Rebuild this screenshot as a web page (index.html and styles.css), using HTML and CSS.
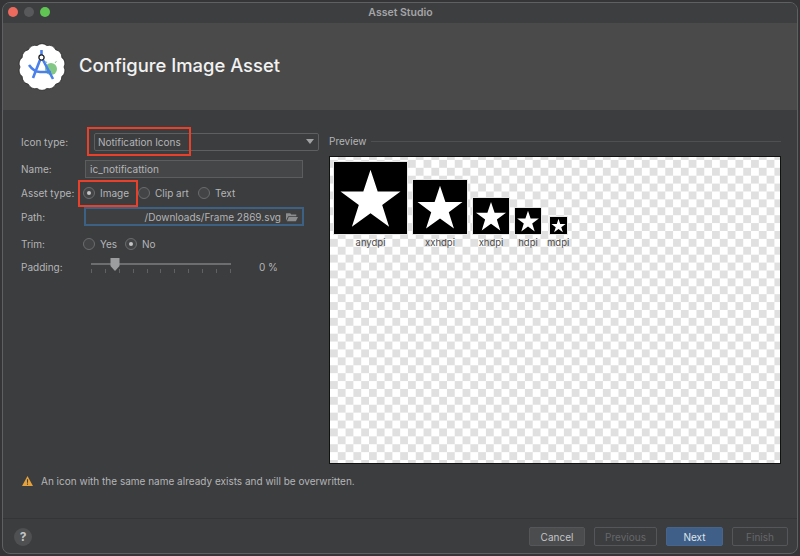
FILE: index.html
```html
<!DOCTYPE html>
<html lang="en">
<head>
  <meta charset="UTF-8">
  <title>Asset Studio</title>
  <link rel="stylesheet" href="styles.css">
</head>
<body>
  <div class="window">
    <div class="titlebar">
      <span class="light light-red"></span>
      <span class="light light-grey"></span>
      <span class="light light-green"></span>
      <span class="titlebar-text">Asset Studio</span>
    </div>

    <div class="header">
      <svg class="logo" viewBox="-24 -24 48 48">
        <path class="logo-badge" d="M22 0A8 8 0 0 1 19.82 9.55A8 8 0 0 1 13.72 17.2A8 8 0 0 1 4.9 21.45A8 8 0 0 1 -4.9 21.45A8 8 0 0 1 -13.72 17.2A8 8 0 0 1 -19.82 9.55A8 8 0 0 1 -22 0A8 8 0 0 1 -19.82 -9.55A8 8 0 0 1 -13.72 -17.2A8 8 0 0 1 -4.9 -21.45A8 8 0 0 1 4.9 -21.45A8 8 0 0 1 13.72 -17.2A8 8 0 0 1 19.82 -9.55A8 8 0 0 1 22 0Z"/>
        <circle class="logo-droid" cx="9" cy="2" r="6"/>
        <path class="logo-antenna" d="M5 -4L3.5 -6M13 -4L14.5 -6"/>
        <path class="logo-lines" d="M-0.5 -17V-11M-2 -7L-9 11M1 -7L11 12M-13 -2Q-8 5 -2 5H9"/>
        <circle class="logo-pivot" cx="-0.5" cy="-9.5" r="2.6"/>
      </svg>
      <h1>Configure Image Asset</h1>
    </div>

    <div class="content">
      <div class="columns">
        <div class="form">
          <div class="row">
            <span class="label">Icon type:</span>
            <div class="combo">Notification Icons<span class="combo-arrow"></span></div>
          </div>
          <div class="row row-far">
            <span class="label">Name:</span>
            <div class="input">ic_notificattion</div>
          </div>
          <div class="row">
            <span class="label">Asset type:</span>
            <div class="radios">
              <span class="radio radio-on"></span><span class="radio-text w-image">Image</span>
              <span class="radio"></span><span class="radio-text w-clip">Clip art</span>
              <span class="radio"></span><span class="radio-text">Text</span>
            </div>
          </div>
          <div class="row row-near row-path">
            <span class="label">Path:</span>
            <div class="input input-focus">/Downloads/Frame 2869.svg
              <svg class="folder" viewBox="0 0 14 11"><path d="M0 1.5V10L2.5 4.5H12V2.5H6L5 1H0.5Z"/><path d="M3.2 5.5H14L11.5 10.5H1Z"/></svg>
            </div>
          </div>
          <div class="row row-far">
            <span class="label">Trim:</span>
            <div class="radios">
              <span class="radio"></span><span class="radio-text w-yes">Yes</span>
              <span class="radio radio-on"></span><span class="radio-text">No</span>
            </div>
          </div>
          <div class="row row-near">
            <span class="label">Padding:</span>
            <div class="slider">
              <div class="slider-track"></div>
              <div class="slider-ticks">
                <i></i><i></i><i></i><i></i><i></i><i></i><i></i><i></i><i></i><i></i><i></i>
              </div>
              <svg class="slider-thumb" viewBox="0 0 10 13"><path d="M0.5 0H9.5V8L5 13L0.5 8Z"/></svg>
            </div>
            <span class="slider-value">0 %</span>
          </div>
          <div class="mark mark-combo"></div>
          <div class="mark mark-image"></div>
        </div>

        <div class="preview">
          <div class="preview-title"><span>Preview</span><div class="preview-rule"></div></div>
          <div class="canvas">
            <div class="icons">
              <div class="icon-col">
                <svg class="icon s73" viewBox="0 0 24 24"><use href="#star"/></svg>
                <span>anydpi</span>
              </div>
              <div class="icon-col">
                <svg class="icon s54" viewBox="0 0 24 24"><use href="#star"/></svg>
                <span>xxhdpi</span>
              </div>
              <div class="icon-col">
                <svg class="icon s36" viewBox="0 0 24 24"><use href="#star"/></svg>
                <span>xhdpi</span>
              </div>
              <div class="icon-col">
                <svg class="icon s26" viewBox="0 0 24 24"><use href="#star"/></svg>
                <span>hdpi</span>
              </div>
              <div class="icon-col">
                <svg class="icon s17" viewBox="0 0 24 24"><use href="#star"/></svg>
                <span>mdpi</span>
              </div>
            </div>
          </div>
        </div>
      </div>

      <div class="warning">
        <svg class="warning-icon" viewBox="0 0 12 11"><path class="warning-fill" d="M6 0L12 11H0Z"/><path class="warning-mark" d="M5.4 3.5H6.6V7.5H5.4ZM5.4 8.3H6.6V9.5H5.4Z"/></svg>
        An icon with the same name already exists and will be overwritten.
      </div>
    </div>

    <div class="footer">
      <div class="help">?</div>
      <div class="buttons">
        <div class="btn">Cancel</div>
        <div class="btn btn-off btn-prev">Previous</div>
        <div class="btn btn-next">Next</div>
        <div class="btn btn-off">Finish</div>
      </div>
    </div>
  </div>

  <svg class="defs" width="0" height="0">
    <polygon id="star" fill="#fff" points="12,2.6 14.4,9.8 22,9.8 15.9,14.3 18.2,21.6 12,17.1 5.8,21.6 8.1,14.3 2,9.8 9.6,9.8"/>
  </svg>
</body>
</html>
```

FILE: styles.css
```css
* {
  box-sizing: border-box;
}

body {
  height: 556px;
  margin: 0;
  padding: 2px;
  overflow: hidden;
  background-color: #353537;
  font-family: 'Inter', 'Liberation Sans', sans-serif;
  font-size: 10px;
  color: #b4b5b7;
}

.window {
  display: flex;
  flex-direction: column;
  height: 552px;
  border: 1px solid #5f6062;
  border-radius: 8px;
  background-color: #3c3d3f;
  overflow: hidden;
}

.titlebar {
  position: relative;
  display: flex;
  align-items: center;
  gap: 6px;
  height: 20px;
  padding: 0 0 2px 5px;
  background-color: #3d3e40;
}

.light {
  width: 10px;
  height: 10px;
  border-radius: 50%;
}

.light-red { background-color: #ec6a5e; }
.light-grey { background-color: #58595b; }
.light-green { background-color: #61c554; }

.titlebar-text {
  position: absolute;
  left: 1px;
  right: 0;
  text-align: center;
  font-size: 10.5px;
  font-weight: 600;
  color: #a4a5a7;
}

.header {
  display: flex;
  align-items: center;
  height: 87px;
  padding-left: 15px;
  background-color: #4a4a4a;
}

.logo {
  width: 48px;
  height: 48px;
  margin-right: 13px;
}

.logo-badge {
  fill: #fff;
  stroke: #1c1c1c;
  stroke-width: 0.7;
}

.logo-droid { fill: #82c784; }

.logo-antenna {
  fill: none;
  stroke: #82c784;
  stroke-width: 1;
}

.logo-lines {
  fill: none;
  stroke: #4a80ec;
  stroke-width: 2.6;
}

.logo-pivot {
  fill: #fff;
  stroke: #1c1c1c;
  stroke-width: 1.3;
}

h1 {
  margin: 0 0 4px;
  font-size: 18.4px;
  font-weight: 500;
  color: #f2f2f2;
}

.content {
  flex: 1;
  padding-top: 23px;
}

.columns {
  display: flex;
  gap: 10px;
  padding-left: 18px;
}

.form {
  position: relative;
  width: 298px;
}

.row {
  display: flex;
  align-items: center;
  height: 18px;
  margin-top: 6px;
}

.row:first-child {
  margin-top: 0;
}

.row-far {
  margin-top: 9px;
}

.row-near {
  margin-top: 5px;
}

.row-path {
  height: 19px;
}

.label {
  flex: none;
  width: 63px;
  white-space: nowrap;
}

.combo {
  position: relative;
  flex: 1;
  display: flex;
  align-items: center;
  height: 18px;
  margin-left: 10px;
  padding-left: 3px;
  border: 1px solid #5e5f61;
  border-radius: 2px;
}

.combo-arrow {
  position: absolute;
  right: 4px;
  top: 5px;
  border-left: 4px solid transparent;
  border-right: 4px solid transparent;
  border-top: 5px solid #a0a2a4;
}

.input {
  position: relative;
  display: flex;
  align-items: center;
  width: 218px;
  height: 18px;
  margin-left: 1px;
  padding-left: 4px;
  border: 1px solid #5b5d5f;
  background-color: #454648;
}

.input-focus {
  justify-content: flex-end;
  width: 220px;
  height: 19px;
  margin-left: 0;
  padding-right: 21px;
  border: 2px solid #3d6185;
  background-color: #3e3f41;
  white-space: nowrap;
}

.folder {
  position: absolute;
  right: 4px;
  top: 3px;
  width: 12px;
  height: 10px;
  fill: #8a8c8e;
}

.radios {
  display: flex;
  align-items: center;
}

.radio {
  flex: none;
  position: relative;
  width: 12px;
  height: 12px;
  margin-left: -1px;
  border: 1px solid #6b6c6e;
  border-radius: 50%;
  background-color: #434446;
}

.radio-on::after {
  content: '';
  position: absolute;
  left: 3px;
  top: 3px;
  width: 4px;
  height: 4px;
  border-radius: 50%;
  background-color: #c4c5c7;
}

.radio-text {
  margin-left: 5px;
  margin-right: 1px;
}

.w-image { width: 38px; }
.w-clip { width: 43px; }
.w-yes { width: 25px; }

.slider {
  position: relative;
  flex: none;
  width: 140px;
  height: 18px;
  margin-left: 7px;
}

.slider-track {
  position: absolute;
  left: 0;
  right: 0;
  top: 5px;
  height: 2px;
  background-color: #6d6e70;
}

.slider-ticks {
  position: absolute;
  left: 0;
  right: 0;
  top: 11px;
  display: flex;
  justify-content: space-between;
}

.slider-ticks i {
  width: 1px;
  height: 4px;
  background-color: #606163;
}

.slider-thumb {
  position: absolute;
  left: 19px;
  top: 0;
  width: 10px;
  height: 13px;
  fill: #9c9d9e;
}

.slider-value {
  margin-left: 28px;
}

.mark {
  position: absolute;
  border: 2px solid #e8402a;
}

.mark-combo {
  left: 66px;
  top: -6px;
  width: 104px;
  height: 29px;
}

.mark-image {
  left: 57px;
  top: 47px;
  width: 60px;
  height: 27px;
}

.preview {
  width: 452px;
  margin-top: -1px;
}

.preview-title {
  display: flex;
  align-items: center;
  gap: 4px;
  height: 18px;
  margin-bottom: 6px;
}

.preview-rule {
  flex: 1;
  height: 1px;
  background-color: #4f5052;
}

.canvas {
  height: 308px;
  padding: 5px 0 0 4px;
  border: 1px solid #111;
  background-color: #fff;
  background-image: conic-gradient(#e0e0e0 25%, transparent 0 50%, #e0e0e0 0 75%, transparent 0);
  background-size: 15.6px 15.8px;
  background-position: 0 -5px;
}

.icons {
  display: flex;
  align-items: flex-end;
  gap: 6px;
}

.icon-col {
  display: flex;
  flex-direction: column;
  align-items: center;
  gap: 3px;
  font-size: 9.5px;
  color: #4a4a4a;
}

.icon {
  display: block;
  background-color: #000;
  outline: 1px solid #e8e8e8;
}

.s73 { width: 73px; height: 72px; }
.s54 { width: 54px; height: 54px; }
.s36 { width: 36px; height: 36px; }
.s26 { width: 26px; height: 26px; }
.s17 { width: 17px; height: 17px; }

.warning {
  display: flex;
  align-items: center;
  gap: 8px;
  height: 14px;
  margin-top: 10px;
  padding-left: 19px;
}

.warning-icon {
  width: 11px;
  height: 10px;
}

.warning-fill { fill: #e5a23c; }
.warning-mark { fill: #3c3d3f; }

.footer {
  display: flex;
  align-items: center;
  justify-content: space-between;
  height: 35px;
  padding: 1px 9px 0 11px;
  border-top: 1px solid #343537;
}

.help {
  display: flex;
  align-items: center;
  justify-content: center;
  width: 18px;
  height: 18px;
  border-radius: 50%;
  background-color: #4f5052;
  font-size: 12px;
  font-weight: 700;
  color: #c4c5c7;
}

.buttons {
  display: flex;
  gap: 9px;
}

.btn {
  display: flex;
  align-items: center;
  justify-content: center;
  width: 56px;
  height: 19px;
  border: 1px solid #55565a;
  border-radius: 2px;
  background-color: #4a4c4e;
  color: #c4c5c7;
}

.btn-off {
  background-color: transparent;
  color: #66676a;
}

.btn-prev {
  width: 63px;
}

.btn-next {
  width: 57px;
  border-color: #47648a;
  background-color: #3f5f89;
  color: #dfe3e8;
}

.defs {
  position: absolute;
}
```
